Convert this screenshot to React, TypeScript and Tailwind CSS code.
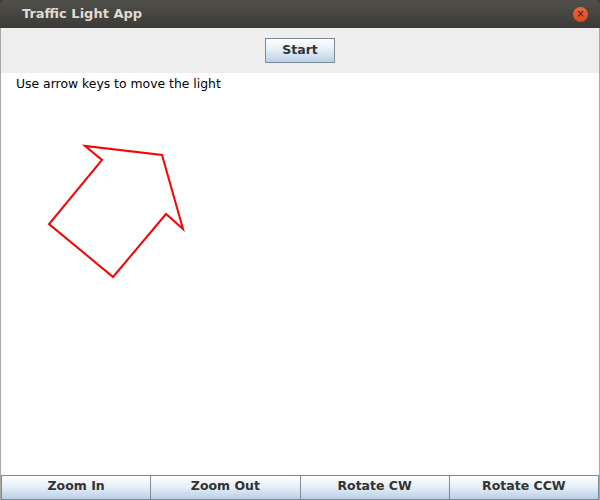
import React from 'react';

const BottomButton: React.FC<{ label: string; className?: string }> = ({ label, className = '' }) => (
  <button
    className={`flex-1 h-[25px] pb-[2px] border border-[#7a8a99] bg-gradient-to-b from-[#ffffff] via-[#e4edf6] to-[#b9cfe6] text-[12.5px] font-bold text-[#333333] ${className}`}
  >
    {label}
  </button>
);

export default function App() {
  return (
    <div className="w-[600px] h-[500px] flex flex-col overflow-hidden bg-[#3c3b37] font-['DejaVu_Sans',sans-serif]">
      <div className="h-[28px] flex items-center justify-between pl-[22px] pr-[12px] rounded-t-[5px] bg-gradient-to-b from-[#504f4a] to-[#3c3b37]">
        <span className="text-[13px] font-bold text-[#dfdbd2]">Traffic Light App</span>
        <span className="w-[15px] h-[15px] rounded-full bg-gradient-to-b from-[#f0683c] to-[#d94a1c] flex items-center justify-center text-[10px] leading-none text-[#3a1a10]">
          ×
        </span>
      </div>
      <div className="flex-1 flex flex-col border-x border-[#a8a8a8] bg-white">
        <div className="h-[45px] bg-[#eeeeee] flex items-center justify-center">
          <button className="w-[70px] h-[25px] border border-[#7a8a99] bg-gradient-to-b from-[#ffffff] via-[#e4edf6] to-[#b9cfe6] text-[12.5px] font-bold text-[#333333]">
            Start
          </button>
        </div>
        <div className="flex-1 relative">
          <p className="pl-[15px] pt-[2px] text-[12.4px] text-black">Use arrow keys to move the light</p>
          <svg className="absolute left-0 top-0" width="598" height="400" viewBox="1 73 598 400">
            <polygon
              points="85,146 102,160 49,224 113,277 166,214 183,229 162,155"
              fill="none"
              stroke="#ff0000"
              strokeWidth="2"
            />
          </svg>
        </div>
        <div className="flex">
          <BottomButton label="Zoom In" />
          <BottomButton label="Zoom Out" className="border-l-0" />
          <BottomButton label="Rotate CW" className="border-l-0" />
          <BottomButton label="Rotate CCW" className="border-l-0" />
        </div>
      </div>
    </div>
  );
}
